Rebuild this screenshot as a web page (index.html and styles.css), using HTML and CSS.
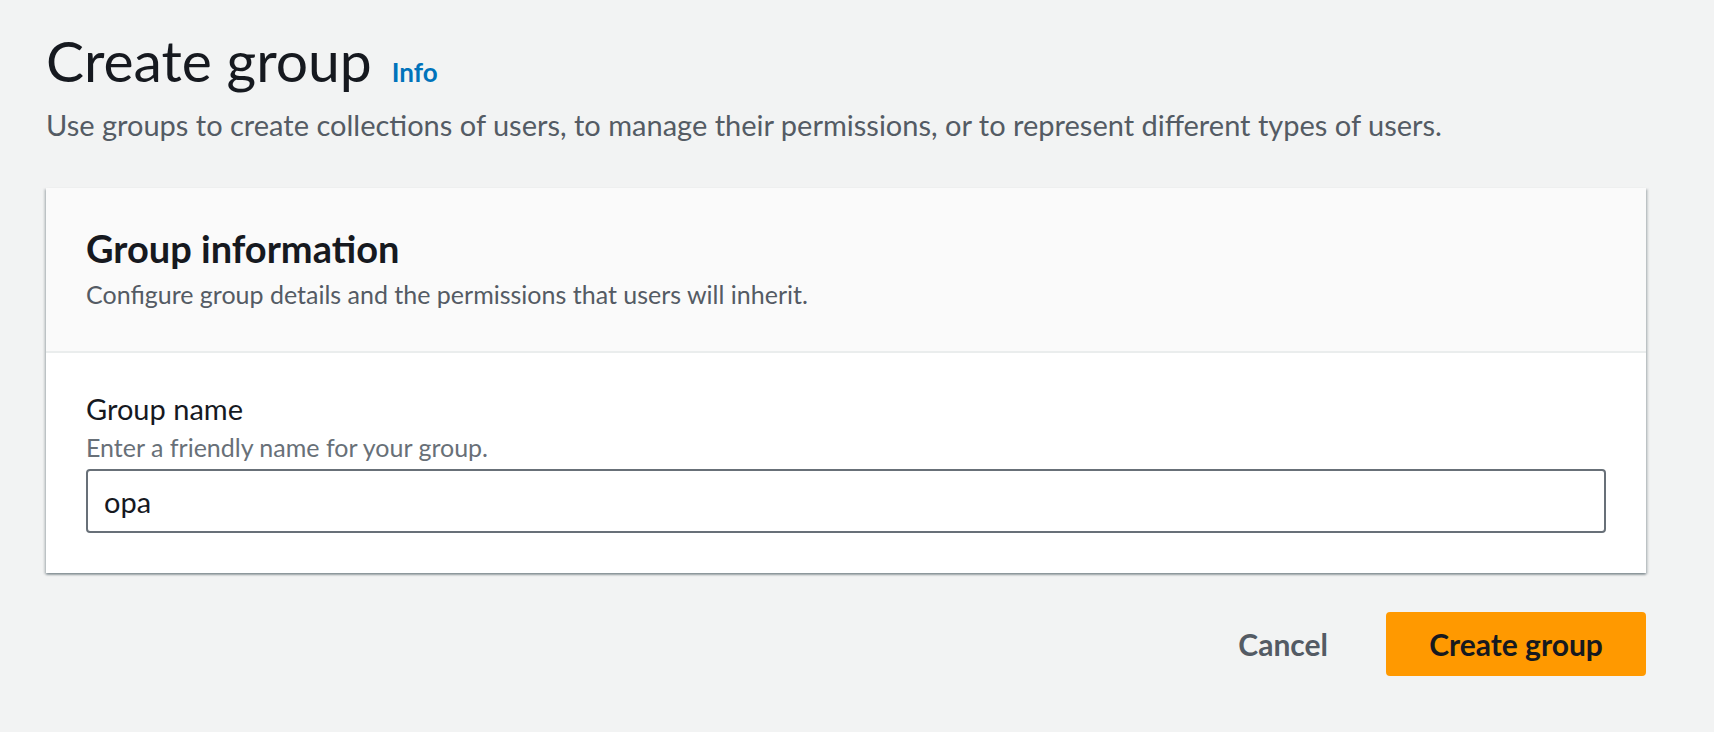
FILE: index.html
```html
<!DOCTYPE html>
<html lang="en">
<head>
<meta charset="utf-8">
<title>Create group</title>
<link rel="stylesheet" href="styles.css">
</head>
<body>
<div class="page">
  <div class="page-header">
    <h1 class="title">Create group</h1>
    <a class="info" href="#">Info</a>
  </div>
  <p class="page-desc">Use groups to create collections of users, to manage their permissions, or to represent different types of users.</p>

  <section class="card">
    <div class="card-header">
      <h2 class="card-title">Group information</h2>
      <p class="card-desc">Configure group details and the permissions that users will inherit.</p>
    </div>
    <div class="card-body">
      <label class="field-label" for="gname">Group name</label>
      <div class="field-desc">Enter a friendly name for your group.</div>
      <input class="field-input" id="gname" type="text" value="opa">
    </div>
  </section>

  <div class="actions">
    <button class="btn-link" type="button">Cancel</button>
    <button class="btn-primary" type="button">Create group</button>
  </div>
</div>
</body>
</html>
```

FILE: styles.css
```css
html, body {
  margin: 0;
  padding: 0;
  background: #f2f3f3;
}
body {
  font-family: "Lato", "Noto Sans", sans-serif;
  color: #16191f;
}
.page {
  width: 1600px;
  padding: 28px 0 0 46px;
}
.page-header {
  display: flex;
  align-items: baseline;
  gap: 20px;
}
.title {
  margin: 0;
  font-size: 57px;
  line-height: 64px;
  font-weight: 400;
  color: #16191f;
}
.info {
  font-size: 26px;
  font-weight: 700;
  color: #0073bb;
  text-decoration: none;
}
.page-desc {
  margin: 13px 0 0 0;
  font-size: 29px;
  line-height: 40px;
  color: #545b64;
}
.card {
  margin-top: 43px;
  background: #fff;
  box-shadow: 0 2px 2px 0 rgba(0,28,36,0.3), 2px 1px 2px 0 rgba(0,28,36,0.15), -2px 1px 2px 0 rgba(0,28,36,0.15);
}
.card-header {
  background: #fafafa;
  padding: 38px 40px 41px;
  border-bottom: 2px solid #eaeded;
}
.card-title {
  margin: 0;
  font-size: 38px;
  line-height: 44px;
  font-weight: 700;
  color: #16191f;
}
.card-desc {
  margin: 8px 0 0 0;
  font-size: 25px;
  line-height: 32px;
  color: #545b64;
}
.card-body {
  padding: 34px 40px 40px;
  display: flex;
  flex-direction: column;
}
.field-label {
  font-size: 29px;
  line-height: 44px;
  color: #16191f;
}
.field-desc {
  font-size: 25px;
  line-height: 32px;
  color: #687078;
}
.field-input {
  margin-top: 6px;
  box-sizing: border-box;
  width: 100%;
  height: 64px;
  border: 2px solid #687078;
  border-radius: 4px;
  padding: 0 16px;
  font-family: inherit;
  font-size: 29px;
  color: #16191f;
  background: #fff;
  outline: none;
}
.actions {
  margin-top: 39px;
  display: flex;
  justify-content: flex-end;
  align-items: center;
  gap: 18px;
}
.btn-link,
.btn-primary {
  font-family: inherit;
  font-size: 30px;
  font-weight: 700;
  height: 64px;
  border-radius: 4px;
  cursor: pointer;
}
.btn-link {
  background: transparent;
  border: 2px solid transparent;
  color: #545b64;
  padding: 0 38px;
}
.btn-primary {
  background: #ff9900;
  border: 2px solid #ff9900;
  color: #16191f;
  padding: 0 40px;
  width: 260px;
}
```
